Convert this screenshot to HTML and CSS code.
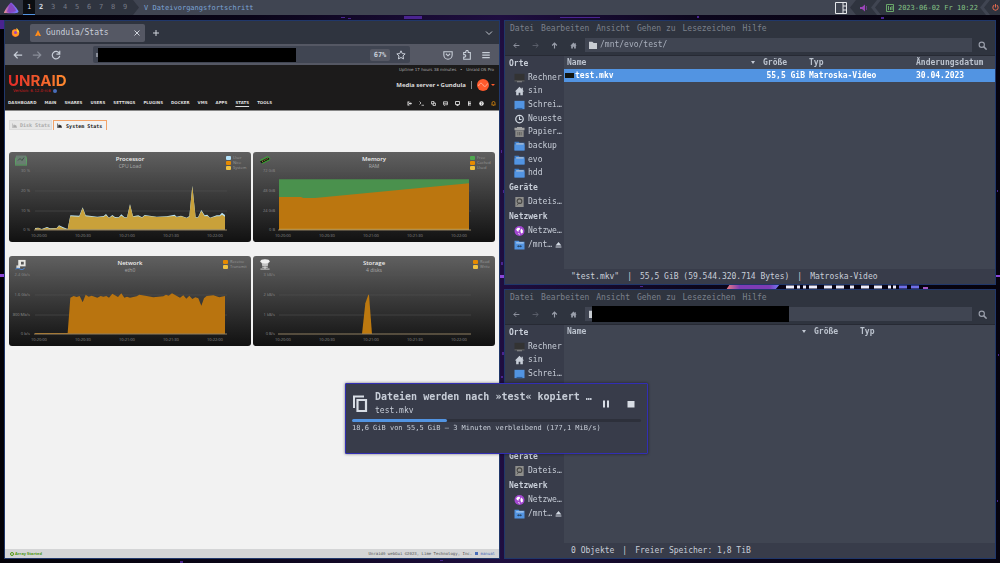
FILE: index.html
```html
<!DOCTYPE html>
<html lang="de">
<head>
<meta charset="utf-8">
<title>Desktop</title>
<link rel="stylesheet" href="styles.css">
</head>
<body class="desktop">
<svg class="symbols" aria-hidden="true">
  <symbol id="left" viewBox="0 0 12 12"><path d="M11 6H1.5M5.5 2 1.5 6l4 4" fill="none" stroke="currentColor" stroke-width="1.5"/></symbol>
  <symbol id="right" viewBox="0 0 12 12"><path d="M1 6h9.500M6.500 2l4 4-4 4" fill="none" stroke="currentColor" stroke-width="1.5"/></symbol>
  <symbol id="up" viewBox="0 0 12 12"><path d="M6 11V2M2 6l4-4 4 4" fill="none" stroke="currentColor" stroke-width="2"/></symbol>
  <symbol id="home" viewBox="0 0 12 12"><path d="M6 1 .5 6.500H2V11h3V8h2v3h3V6.500h1.500L10 5V2H8.500v1.500z" fill="currentColor"/></symbol>
  <symbol id="search" viewBox="0 0 12 12"><circle cx="5" cy="5" r="3.500" fill="none" stroke="currentColor" stroke-width="1.500"/><path d="m7.500 7.500 4 4" stroke="currentColor" stroke-width="2"/></symbol>
  <symbol id="screen" viewBox="0 0 12 12"><path d="M0 1h12v8H0z" fill="#333"/><path d="M0 9h12v1H0z" fill="#6b6b66"/><path d="M3 10.500h6" stroke="#999"/></symbol>
  <symbol id="desk" viewBox="0 0 12 12"><path d="M0 1h12v10H0z" fill="#5294e2"/><path d="M2.500 11V9.500h7V11z" fill="#2b5f9f"/></symbol>
  <symbol id="clock" viewBox="0 0 12 12"><circle cx="6" cy="6" r="4.500" fill="none" stroke="#d3dae3" stroke-width="1.500"/><path d="M6 3v3.500h2.500" fill="none" stroke="#d3dae3" stroke-width="1.300"/></symbol>
  <symbol id="trash" viewBox="0 0 12 12"><path d="M3 0h6v1h3v3H0V1h3z" fill="#a5a5a5"/><path d="M1 4h10v8H1z" fill="#8b8b88"/><path d="M4 6v4M6 6v4M8 6v4" stroke="#5c5c5a"/></symbol>
  <symbol id="folder" viewBox="0 0 12 12"><path d="M0 1h5l1 1h6v9H0z" fill="#3f7fcb"/><path d="M0 4h12v7.500H0z" fill="#5294e2"/><path d="M2 3h9v1H2z" fill="#f0e6dc"/></symbol>
  <symbol id="share" viewBox="0 0 12 12"><path d="M0 1h5l1 1h6v9.500H0z" fill="#5294e2"/><path d="M2 3h9v1H2z" fill="#dce8f5"/><path d="M3 7.500 5 6v3zM9 7.500 7 6v3zM5 7h2v1H5z" fill="#24405f"/></symbol>
  <symbol id="drive" viewBox="0 0 12 12"><path d="M1 0h10v12H1z" fill="#8f8f8c"/><circle cx="6" cy="5" r="2.800" fill="none" stroke="#484846" stroke-width="1.400"/><path d="m3 10 3-4" stroke="#484846"/></symbol>
  <symbol id="globe" viewBox="0 0 12 12"><circle cx="6" cy="6" r="6" fill="#a347d1"/><path d="m2 4 2-2h2l1 2-2 1v2L3 6zM8 3l2 2v3L8 9 7 6zM4 8l2 1v2z" fill="#fff"/></symbol>
  <symbol id="eject" viewBox="0 0 12 12"><path d="m6 0 5 6H1zM1 7.500h10v2H1z" fill="#d3dae3"/></symbol>
  <symbol id="file" viewBox="0 0 12 12"><path d="M0 1h5l2 2h5v9H0z" fill="#c8ccd2"/></symbol>
  <symbol id="area" viewBox="0 0 12 12"><path d="M1 1v10h11" fill="none" stroke="currentColor" stroke-width="1.500"/><path d="M3 10V6l2-3 2 3 2-1 2 2v3z" fill="currentColor"/></symbol>
</svg>

<svg class="wallpaper" viewBox="0 0 1000 563" preserveAspectRatio="none" aria-hidden="true">
  <defs>
    <linearGradient id="sky"><stop offset="0" stop-color="#030208"/><stop offset=".25" stop-color="#0a0518"/><stop offset=".5" stop-color="#1f0e40"/><stop offset=".7" stop-color="#0c061c"/><stop offset="1" stop-color="#06030e"/></linearGradient>
    <linearGradient id="mark"><stop offset="0" stop-color="#f07f7f"/><stop offset=".25" stop-color="#7d3cb5"/><stop offset=".8" stop-color="#7d3cb5"/><stop offset="1" stop-color="#7080ff"/></linearGradient>
    <linearGradient id="ship"><stop offset="0" stop-color="#f49b92"/><stop offset=".4" stop-color="#8446cf"/><stop offset="1" stop-color="#7384ff"/></linearGradient>
  </defs>
  <path d="M0 0h1000v563H0z" fill="url(#sky)"/>
  <path d="M0 274h5v3H0zM499 275h6v3h-6zM996 275h4v2h-4z" fill="#8b46d8"/>
  <path d="M341 17h4v1h-4zM348 18h3v1h-3zM404 16h18v3h-18zM180 561h3v2h-3zM440 560h3v1h-3zM560 17h40v1h-40zM697 16h2v2h-2zM881 17h3v2h-3zM0 20h4v9H0zM501 150h1v3h-1zM503 190h1v3h-1zM501 262h2v3h-2zM502 352h2v3h-2zM501 376h2v2h-2zM640 286h3v1h-3zM997 190h1v2h-1zM998 354h1v2h-1zM997 500h1v2h-1z" fill="#4a2490"/>
  <path d="m730 284h50l-5 6h-49z" fill="url(#mark)"/>
  <path d="M786 287h8M797 287h3M803 287h3M809 287h8M824 287h8M836 287h8M850 287h4M861 287h8M874 287h8M888 287h3M893 287h3" stroke="#eef" stroke-width="3"/>
  <path d="M899 287h8M911 287h8" stroke="#6e70e8" stroke-width="3"/>
  <path d="M923 288h5" stroke="#a458c8" stroke-width="2"/>
</svg>

<header class="bar">
  <div class="bar-left">
    <svg class="ship" viewBox="0 0 16 12"><path d="M8 .500c2 1 7 7 7.500 9-.5 2-4 2-14.500 1.500C1 9 6 2 8 .500z" fill="url(#ship)"/><path d="M8 2c2 2 5 5 5 7-1 1-8 1-9 .500C5 7 7 4 8 2z" fill="#8547bd"/></svg>
    <nav class="spaces"><button class="on">1</button><button class="used">2</button><button>3</button><button>4</button><button>5</button><button>6</button><button>7</button><button>8</button><button>9</button></nav>
  </div>
  <svg class="wedge" viewBox="0 0 6 15"><path d="M0 0 6 7.500 0 15z" fill="#2f343f"/></svg>
  <span class="bar-title">V Dateivorgangsfortschritt</span>
  <svg class="layout" viewBox="0 0 12 12"><path d="M.5.500h11v11H.5zM8 .500v11M8 4h3.500M8 8h3.500" fill="none" stroke="#e4e6ea"/></svg>
  <svg class="wedge" viewBox="0 0 6 15"><path d="M6 0 0 7.500 6 15z" fill="#2f343f"/></svg>
  <div class="bar-sound"><svg viewBox="0 0 8 8"><path d="M0 3h2l3-2.500v7L2 5H0z" fill="#9a45b8"/><path d="M6.500 2v4" stroke="#6b3a88"/></svg></div>
  <svg class="wedge wide" viewBox="0 0 10 15"><path d="M0 0h10v15H0z" fill="#2f343f"/><path d="M6 0 0 7.500 6 15h4L4 7.500 10 0z" fill="#404552"/></svg>
  <div class="bar-date"><svg viewBox="0 0 8 8"><path d="M.5.500h7v7h-7zM2.500 2v4M4.500 3v3M6 2v4" fill="none" stroke="#6aa86a"/></svg><time>2023-06-02 Fr 10:22</time></div>
  <svg class="wedge wide" viewBox="0 0 10 15"><path d="M0 0h10v15H0z" fill="#2f343f"/><path d="M6 0 0 7.500 6 15h4L4 7.500 10 0z" fill="#404552"/></svg>
  <button class="power" aria-label="Power"><svg viewBox="0 0 8 8"><path d="M2.500 1.500a3 3 0 1 0 3 0M4 0v4" fill="none" stroke="#e0694f" stroke-width="1.200"/></svg></button>
</header>

<main class="tiles">
  <section class="win browser">
    <div class="tabs">
      <svg class="fox" viewBox="0 0 12 12"><circle cx="6" cy="6.500" r="5" fill="#ff5b36"/><path d="M2 3c3-2 5 0 8 1 2 3 0 7-4 7.500C3 11 1 8 2 3z" fill="#ff9a22"/><circle cx="6" cy="6" r="2" fill="#a03fc0"/><path d="M7 0c2 1 4 4 4 6L8 5z" fill="#ffd43a"/></svg>
      <div class="tab"><svg viewBox="0 0 8 8"><path d="m4 0 4 8H5L4 6 3 8H0z" fill="#ff8c1a"/></svg><span>Gundula/Stats</span><button aria-label="Tab schließen"><svg viewBox="0 0 8 8"><path d="m1.500 1.500 5 5m0-5-5 5" stroke="#d0d4dc"/></svg></button></div>
      <button class="plus" aria-label="Neuer Tab"><svg viewBox="0 0 8 8"><path d="M4 1v6M1 4h6" stroke="#d0d4dc"/></svg></button>
      <button class="more" aria-label="Tabs"><svg viewBox="0 0 8 8"><path d="m1 2.500 3 3 3-3" fill="none" stroke="#c0c4cc"/></svg></button>
    </div>
    <div class="tools">
      <button aria-label="Zurück"><svg><use href="#left"/></svg></button>
      <button class="dim" aria-label="Vor"><svg><use href="#right"/></svg></button>
      <button aria-label="Neu laden"><svg viewBox="0 0 12 12"><path d="M10 4a4.500 4.500 0 1 0 .5 3M10.500 1v4h-4" fill="none" stroke="currentColor" stroke-width="1.400"/></svg></button>
      <div class="url"><span class="shield"></span><span class="redact"></span><span class="zoom">67%</span><svg class="star" viewBox="0 0 12 12"><path d="m6 1 1.500 3.300 3.500.4-2.600 2.400.7 3.600L6 9l-3.100 1.700.7-3.600L1 4.700l3.500-.4z" fill="none" stroke="currentColor" stroke-width="1.200"/></svg></div>
      <div class="exts">
        <button aria-label="Pocket"><svg viewBox="0 0 12 12"><path d="M1 2h10v4a5 5 0 0 1-10 0zM3.500 4.500 6 7l2.500-2.500" fill="none" stroke="currentColor" stroke-width="1.300"/></svg></button>
        <button aria-label="Erweiterungen"><svg viewBox="0 0 12 12"><path d="M2 3h2.500V2a1.500 1.500 0 0 1 3 0v1H10v8H2V8.500h1a1.500 1.500 0 0 0 0-3H2z" fill="none" stroke="currentColor" stroke-width="1.300"/></svg></button>
        <button aria-label="Menü"><svg viewBox="0 0 12 12"><path d="M1.500 3h9M1.500 6h9M1.500 9h9" stroke="currentColor" stroke-width="1.500"/></svg></button>
      </div>
    </div>
    <div class="uhead">
      <div class="ubrand"><span class="ulogo">UNRAID</span><span class="uver">Version: 6.12.0-rc6 <i></i></span></div>
      <div class="uinfo">
        <p class="uptime">Uptime 17 hours 38 minutes &nbsp; • &nbsp; Unraid OS Pro</p>
        <p class="server"><span>Media server • Gundula</span><span class="vline"></span><svg viewBox="0 0 12 12"><circle cx="6" cy="6" r="6" fill="#ff5a2c"/><path d="M1.500 7C3 3 5 4 6 6s3 2 4.500-1.500" fill="none" stroke="#ffb199"/></svg><b class="caret"></b></p>
      </div>
      <nav class="unav"><a href="#">DASHBOARD</a><a href="#">MAIN</a><a href="#">SHARES</a><a href="#">USERS</a><a href="#">SETTINGS</a><a href="#">PLUGINS</a><a href="#">DOCKER</a><a href="#">VMS</a><a href="#">APPS</a><a href="#" class="cur">STATS</a><a href="#">TOOLS</a></nav>
      <div class="uicons">
        <svg viewBox="0 0 10 10"><path d="M1 1h4v2H3v4h2v2H1zM4 4h3V2l3 3-3 3V6H4z" fill="#ddd"/></svg>
        <svg viewBox="0 0 10 10"><path d="m1 1 3 3-3 3M5 8.500h5" fill="none" stroke="#ddd" stroke-width="1.500"/></svg>
        <svg viewBox="0 0 10 10"><path d="M1 1h5v5H1zM4 4h5v5H4z" fill="none" stroke="#ddd" stroke-width="1.500"/></svg>
        <svg viewBox="0 0 10 10"><path d="M1 1.500h8v6H5L3 9V7.500H1zM1 4.500h8" fill="none" stroke="#ddd" stroke-width="1.500"/></svg>
        <svg viewBox="0 0 10 10"><path d="M1 1h8v6H1zM3 9h4" fill="none" stroke="#ddd" stroke-width="1.800"/></svg>
        <svg viewBox="0 0 10 10"><path d="M2 2h6M2 5h6M2 8h6M3 1v8" stroke="#ddd" stroke-width="1.800"/></svg>
        <svg viewBox="0 0 10 10"><circle cx="5" cy="5" r="4.500" fill="#eee"/><path d="M3.500 4Q5 1 6.500 4L5 6v2" fill="none" stroke="#222"/></svg>
        <svg viewBox="0 0 10 10"><path d="M2 7V4a3 3 0 0 1 6 0v3l1 1H1zM4 9.500h2" fill="none" stroke="#e48d0c" stroke-width="1.500"/></svg>
      </div>
    </div>
    <div class="upage">
      <div class="utabs"><button><svg><use href="#area"/></svg>Disk Stats</button><button class="cur"><svg><use href="#area"/></svg>System Stats</button></div>
      <div class="charts">
        <figure class="card">
          <svg class="plot" viewBox="0 0 242 90">
            <path class="grid" d="M26 19h192M26 39h192M26 59h192"/>
            <g transform="translate(-9 -40) scale(.33333)"><path fill="#b9e2f2" d="M105 353V348L115 347L125 351L141 345L150 349L170 348L177 340L190 346L203 351L211 310L238 311L248 286L257 310L292 314L311 312L318 306L327 317L337 309L345 315L356 316L364 307L374 316L381 316L390 276L399 313L415 310L426 316L434 309L470 314L500 313L524 308L530 314L543 311L560 317L568 312L577 221L587 316L594 316L604 294L614 310L622 308L630 317L650 310L659 310L666 302L675 309V353z"/><path fill="#c9a13a" d="M105 353V350L115 348L125 352L141 347L150 350L170 349L177 342L190 349L203 352L211 313L238 314L248 288L257 313L292 316L311 314L318 310L327 318L337 312L345 317L356 317L364 311L374 317L381 317L390 278L399 314L415 313L426 317L434 311L470 315L500 314L524 312L530 316L543 313L560 318L568 314L577 223L587 317L594 317L604 297L614 313L622 312L630 318L650 313L659 313L666 308L675 314V353z"/></g>
            <path class="axis" d="M25 78h193"/>
            <g class="ylab"><text x="21" y="20">30 %</text><text x="21" y="40">20 %</text><text x="21" y="60">10 %</text><text x="21" y="79">0 %</text></g>
            <g class="xlab"><text x="30" y="85">10:20:00</text><text x="74" y="85">10:20:30</text><text x="118" y="85">10:21:00</text><text x="162" y="85">10:21:30</text><text x="206" y="85">10:22:00</text></g>
          </svg>
          <figcaption class="cap"><svg class="cicon" viewBox="0 0 12 10"><path d="M1 0h10l1 9H0z" fill="#6a7d72"/><path d="M0 9.500h12M1 2 0 9M11 1l1 8" stroke="#58a862"/><path d="m3 5 2-2 2 2 2-3" fill="none" stroke="#3f4f46"/></svg><div class="ctitle"><h3>Processor</h3><p>CPU Load</p></div><ul class="legend"><li class="c-user">User</li><li class="c-or">Nice</li><li class="c-ye">System</li></ul></figcaption>
        </figure>
        <figure class="card">
          <svg class="plot" viewBox="0 0 242 90">
            <path class="grid" d="M26 19h192M26 39h192M26 59h192"/>
            <g transform="translate(-3 -7) scale(.33333)"><path fill="#4a914d" d="M87 103H657V255H87z"/><path fill="#bb760f" d="M87 156H153L160 159H195L657 115V255H87z"/><path fill="#d0a03a" d="M87 251H657V255H87z"/></g>
            <path class="axis" d="M25 78h193"/>
            <g class="ylab"><text x="22" y="20">72 GiB</text><text x="22" y="40">48 GiB</text><text x="22" y="60">24 GiB</text><text x="22" y="79">0 B</text></g>
            <g class="xlab"><text x="30" y="85">10:20:00</text><text x="74" y="85">10:20:30</text><text x="118" y="85">10:21:00</text><text x="162" y="85">10:21:30</text><text x="206" y="85">10:22:00</text></g>
          </svg>
          <figcaption class="cap"><svg class="cicon" viewBox="0 0 12 10"><path d="m1 6 8-4 2 2-8 4z" fill="#111"/><path d="m1 5 8-4 2 2M3 8l8-4" fill="none" stroke="#35b02c"/><path d="m3 6 6-3" stroke="#c8b23a" stroke-dasharray="1 1"/></svg><div class="ctitle"><h3>Memory</h3><p>RAM</p></div><ul class="legend"><li class="c-gr">Free</li><li class="c-or">Cached</li><li class="c-ye">Used</li></ul></figcaption>
        </figure>
        <figure class="card">
          <svg class="plot" viewBox="0 0 242 90">
            <path class="grid" d="M26 19h192M26 39h192M26 59h192"/>
            <path fill="#b9740f" transform="translate(-9 -6) scale(.33333)" d="M105 252V249H203L211 143L221 138L230 141L239 138L248 157L257 134L266 140L275 137L292 143L302 138L310 140L319 138L327 143L337 131L354 141L364 130L373 143L381 140L390 143L410 139L418 134L440 138L460 142L490 139L498 134L506 137L516 130L540 143L550 136L559 146L568 137L577 147L586 142L595 145L604 167L612 145L620 138L640 136L658 142L675 138V252z"/>
            <path class="axis" d="M25 78h193"/>
            <g class="ylab"><text x="21" y="20">2.4 Gb/s</text><text x="21" y="40">1.6 Gb/s</text><text x="21" y="60">800 Mb/s</text><text x="21" y="79">0 b/s</text></g>
            <g class="xlab"><text x="30" y="85">10:20:00</text><text x="74" y="85">10:20:30</text><text x="118" y="85">10:21:00</text><text x="162" y="85">10:21:30</text><text x="206" y="85">10:22:00</text></g>
          </svg>
          <figcaption class="cap long"><svg class="cicon" viewBox="0 0 12 12"><path d="M3 1h8v7H3z" fill="#e8e8e4"/><path d="M6 3h3v3H6z" fill="#555"/><path d="M1 7h4v3H1z" fill="#dcdcd8"/><path d="M0 11q3-2 5 0t5-1" fill="none" stroke="#4a8be0"/></svg><div class="ctitle"><h3>Network</h3><p>eth0</p></div><ul class="legend"><li class="c-or">Receive</li><li class="c-ye">Transmit</li></ul></figcaption>
        </figure>
        <figure class="card">
          <svg class="plot" viewBox="0 0 242 90">
            <path class="grid" d="M26 19h192M26 39h192M26 59h192"/>
            <path fill="#bd790f" transform="translate(-3 -6) scale(.33333)" d="M336 252 346 160 355 134H357L366 252z"/>
            <path class="axis" d="M25 78h193"/>
            <g class="ylab"><text x="22" y="20">3 kB/s</text><text x="22" y="40">2 kB/s</text><text x="22" y="60">1 kB/s</text><text x="22" y="79">0 B/s</text></g>
            <g class="xlab"><text x="30" y="85">10:20:00</text><text x="74" y="85">10:20:30</text><text x="118" y="85">10:21:00</text><text x="162" y="85">10:21:30</text><text x="206" y="85">10:22:00</text></g>
          </svg>
          <figcaption class="cap short"><svg class="cicon" viewBox="0 0 12 12"><path d="M2 2h8l-1 6H3z" fill="#c2c2c2"/><ellipse cx="6" cy="2.500" rx="5" ry="2.300" fill="#f0f0f0"/><path d="M3 9h6M6 8v3M1 11h10" stroke="#ddd"/></svg><div class="ctitle"><h3>Storage</h3><p>4 disks</p></div><ul class="legend"><li class="c-or">Read</li><li class="c-ye">Write</li></ul></figcaption>
        </figure>
      </div>
    </div>
    <footer class="ufoot"><span class="array"><i></i>Array Started</span><span class="copy">Unraid® webGui ©2023, Lime Technology, Inc. <a href="#"><i></i>manual</a></span></footer>
  </section>

  <section class="win files">
    <nav class="menu"><button>Datei</button><button>Bearbeiten</button><button>Ansicht</button><button>Gehen zu</button><button>Lesezeichen</button><button>Hilfe</button></nav>
    <div class="path">
      <button aria-label="Zurück"><svg><use href="#left"/></svg></button><button class="dim" aria-label="Vor"><svg><use href="#right"/></svg></button><button aria-label="Hoch"><svg><use href="#up"/></svg></button><button aria-label="Home"><svg><use href="#home"/></svg></button>
      <label class="loc"><svg><use href="#file"/></svg><input aria-label="Pfad" value="/mnt/evo/test/"></label>
      <button class="find" aria-label="Suchen"><svg><use href="#search"/></svg></button>
    </div>
    <aside class="side">
      <h2>Orte</h2>
      <ul class="places"><li><svg><use href="#screen"/></svg>Rechner</li><li><svg><use href="#home"/></svg>sin</li><li><svg><use href="#desk"/></svg>Schrei…</li><li><svg><use href="#clock"/></svg>Neueste</li><li><svg><use href="#trash"/></svg>Papier…</li><li><svg><use href="#folder"/></svg>backup</li><li><svg><use href="#folder"/></svg>evo</li><li><svg><use href="#folder"/></svg>hdd</li></ul>
      <h2>Geräte</h2>
      <ul><li><svg><use href="#drive"/></svg>Dateis…</li></ul>
      <h2>Netzwerk</h2>
      <ul><li><svg><use href="#globe"/></svg>Netzwe…</li><li><svg><use href="#share"/></svg>/mnt…<svg class="eject"><use href="#eject"/></svg></li></ul>
    </aside>
    <div class="list">
      <table>
        <colgroup><col><col class="w-size"><col class="w-type"><col class="w-date"></colgroup>
        <thead><tr><th><span class="sort">Name</span></th><th>Größe</th><th>Typ</th><th>Änderungsdatum</th></tr></thead>
        <tbody><tr><td><span class="entry"><i class="thumb"></i>test.mkv</span></td><td class="num">55,5 GiB</td><td>Matroska-Video</td><td>30.04.2023</td></tr></tbody>
      </table>
    </div>
    <div class="status"><span>"test.mkv"</span><span>|</span><span>55,5 GiB (59.544.320.714 Bytes)</span><span>|</span><span>Matroska-Video</span></div>
  </section>

  <section class="win files">
    <nav class="menu"><button>Datei</button><button>Bearbeiten</button><button>Ansicht</button><button>Gehen zu</button><button>Lesezeichen</button><button>Hilfe</button></nav>
    <div class="path">
      <button aria-label="Zurück"><svg><use href="#left"/></svg></button><button class="dim" aria-label="Vor"><svg><use href="#right"/></svg></button><button aria-label="Hoch"><svg><use href="#up"/></svg></button><button aria-label="Home"><svg><use href="#home"/></svg></button>
      <div class="loc"><svg><use href="#file"/></svg><span class="redact"></span></div>
      <button class="find" aria-label="Suchen"><svg><use href="#search"/></svg></button>
    </div>
    <aside class="side">
      <h2>Orte</h2>
      <ul class="places"><li><svg><use href="#screen"/></svg>Rechner</li><li><svg><use href="#home"/></svg>sin</li><li><svg><use href="#desk"/></svg>Schrei…</li></ul>
      <h2>Geräte</h2>
      <ul><li><svg><use href="#drive"/></svg>Dateis…</li></ul>
      <h2>Netzwerk</h2>
      <ul><li><svg><use href="#globe"/></svg>Netzwe…</li><li><svg><use href="#share"/></svg>/mnt…<svg class="eject"><use href="#eject"/></svg></li></ul>
    </aside>
    <div class="list">
      <table>
        <colgroup><col><col class="w-size"><col class="w-last"></colgroup>
        <thead><tr><th><span class="sort">Name</span></th><th>Größe</th><th>Typ</th></tr></thead>
      </table>
    </div>
    <div class="status"><span>0 Objekte</span><span>|</span><span>Freier Speicher: 1,8 TiB</span></div>
  </section>
</main>

<section class="dialog" role="dialog" aria-labelledby="job">
  <div class="job">
    <svg class="copyicon" viewBox="0 0 16 18"><path d="M2 13V1.500h10" fill="none" stroke="#d8dde5" stroke-width="2"/><path d="M5.500 5h8.500v11H5.500z" fill="none" stroke="#d8dde5" stroke-width="2.200"/></svg>
    <div class="jobtext"><h2 id="job">Dateien werden nach »test« kopiert …</h2><p>test.mkv</p></div>
    <button aria-label="Pause"><svg viewBox="0 0 8 8"><path d="M1 .500h2v7H1zM5 .500h2v7H5z" fill="#d8dde5"/></svg></button>
    <button aria-label="Stopp"><svg viewBox="0 0 8 8"><path d="M.500 1h7v6.500h-7z" fill="#d8dde5"/></svg></button>
  </div>
  <progress value="33" max="100" aria-labelledby="job"></progress>
  <p class="rate">18,6 GiB von 55,5 GiB — 3 Minuten verbleibend (177,1 MiB/s)</p>
</section>
</body>
</html>
```
FILE: styles.css
```css
* { box-sizing: border-box; margin: 0; padding: 0; }
button { background: none; border: 0; color: inherit; font: inherit; display: flex; align-items: center; justify-content: center; }
ul { list-style: none; }
a { color: inherit; text-decoration: none; }
svg { display: block; flex: none; }

.desktop { height: 100vh; display: flex; flex-direction: column; overflow: hidden; background: #08040f; color: #c8ced8; font: 8px/12px "DejaVu Sans Mono", "Liberation Mono", monospace; }
.symbols { position: absolute; width: 0; height: 0; }
.wallpaper { position: fixed; inset: 0; width: 100%; height: 100%; z-index: -1; }

/* Top bar */
.bar { flex: none; height: 15px; display: flex; align-items: center; background: #404552; font-size: 7px; }
.bar-left { display: flex; align-items: center; height: 15px; background: #2f343f; padding-left: 3px; width: 133px; gap: 4px; }
.ship { width: 16px; height: 12px; }
.spaces { display: flex; height: 15px; color: #767b87; }
.spaces button { width: 12px; border-bottom: 1px solid transparent; }
.spaces .on { background: #0b0d11; border-color: #5294e2; color: #d3dae3; }
.spaces .used { color: #d3dae3; font-weight: bold; }
.wedge { width: 6px; height: 15px; }
.wedge.wide { width: 10px; }
.bar-title { padding-left: 5px; color: #7ba3d4; flex: 1; }
.layout { width: 12px; height: 12px; margin-right: 3px; }
.bar-sound { background: #2f343f; height: 15px; width: 15px; display: flex; align-items: center; padding-left: 4px; }
.bar-sound svg { width: 8px; height: 8px; }
.bar-date { background: #2f343f; height: 15px; display: flex; align-items: center; gap: 4px; padding: 0 2px 0 5px; color: #84c285; }
.bar-date svg { width: 8px; height: 8px; }
.power { background: #2f343f; height: 15px; width: 10px; }
.power svg { width: 7px; height: 7px; }

/* Tiled windows */
.tiles { flex: 1; min-height: 0; display: grid; grid-template-columns: 496fr 492fr; grid-template-rows: 265fr 270fr; gap: 4px; padding: 5px 4px 4px; }
.win { border: 1px solid #20376a; min-width: 0; min-height: 0; overflow: hidden; }
.redact { background: #000; }

/* Browser */
.browser { grid-row: 1 / 3; display: flex; flex-direction: column; background: #f2f2f2; }
.tabs { height: 23px; background: #2f343f; display: flex; align-items: center; padding-right: 6px; }
.fox { width: 9px; height: 9px; margin: 0 7px 0 6px; }
.tab { width: 115px; height: 18px; margin-left: 3px; background: #555864; border-radius: 2px; display: flex; align-items: center; padding: 0 4px 0 5px; gap: 5px; }
.tab > svg { width: 6px; height: 6px; }
.tab span { flex: 1; }
.tab button svg, .plus svg, .more svg { width: 8px; height: 8px; }
.plus { margin-left: 7px; }
.more { margin-left: auto; }
.tools { height: 21px; background: #555864; display: flex; align-items: center; padding: 0 8px 0 7px; }
.tools > button { width: 11px; margin-right: 8px; }
.tools button svg { width: 10px; height: 10px; }
.dim { opacity: .45; }
.url { width: 317px; height: 17px; margin-left: 24px; background: #404552; border-radius: 2px; display: flex; align-items: center; }
.shield { width: 2px; height: 4px; margin-left: 3px; background: #8a8f9a; }
.url .redact { width: 198px; height: 14px; }
.zoom { margin-left: auto; width: 20px; height: 12px; background: #555864; border-radius: 2px; text-align: center; font-size: 7px; font-weight: bold; }
.star { width: 10px; height: 10px; margin: 0 4px 0 6px; }
.exts { margin-left: auto; display: flex; gap: 9px; }

/* Unraid header */
.uhead { height: 46px; background: #1c1b1b; border-bottom: 1px solid #888; display: grid; grid-template-columns: 1fr auto; grid-template-rows: 31px 1fr; padding: 0 3px; font-family: "Open Sans", "DejaVu Sans", sans-serif; color: #ddd; }
.ubrand { padding-top: 8px; }
.ulogo { display: block; width: max-content; font: bold 15px/15px Inter, sans-serif; background: linear-gradient(90deg, #e22828, #ff8c2f); background-clip: text; -webkit-background-clip: text; color: transparent; }
.uver { display: flex; align-items: center; gap: 2px; padding-left: 5px; color: #d01c1c; font-size: 4px; line-height: 6px; font-family: "DejaVu Sans", sans-serif; }
.uver i { width: 4px; height: 4px; border-radius: 50%; background: #486dba; }
.uinfo { text-align: right; }
.uptime { font-size: 4px; line-height: 6px; padding: 2px 2px 0 0; color: #aaa; font-family: "DejaVu Sans", sans-serif; }
.server { display: flex; align-items: center; justify-content: flex-end; margin-top: 2px; height: 20px; gap: 5px; font: bold 6px/12px "Open Sans", sans-serif; padding-right: 1px; }
.server svg { width: 12px; height: 12px; }
.vline { width: 1px; height: 8px; background: #888; }
.caret { border: 2px solid transparent; border-top-color: #ff5a2c; border-bottom: 0; margin-left: -3px; }
.unav { display: flex; align-items: center; gap: 8px; font: bold 4px/8px "DejaVu Sans", sans-serif; }
.unav .cur { text-decoration: underline; text-underline-offset: 2px; }
.uicons { display: flex; align-items: center; justify-content: flex-end; gap: 7px; }
.uicons svg { width: 5px; height: 5px; }

/* Unraid page */
.upage { flex: 1; min-height: 0; padding: 9px 4px; }
.utabs { display: flex; gap: 1px; font-size: 5px; line-height: 8px; font-weight: bold; color: #aaa; }
.utabs button { height: 10px; padding: 0 1px 0 2px; gap: 3px; background: #e6e6e6; border: 1px solid #ddd; }
.utabs svg { width: 5px; height: 5px; }
.utabs .cur { padding: 0 4px 0 3px; gap: 4px; background: #f2f2f2; border-color: #f3a469; border-bottom: 0; color: #222; }
.charts { display: grid; grid-template-columns: 1fr 1fr; column-gap: 2px; row-gap: 14px; padding-top: 22px; }
.card { display: grid; background: linear-gradient(#606060, #111); border-radius: 3px; }
.plot, .cap { grid-area: 1 / 1; }
.plot { width: 100%; height: auto; }
.grid { stroke: #555; stroke-opacity: .5; fill: none; }
.axis { stroke: #8f7e60; fill: none; }
.ylab, .xlab { font: 4px "Open Sans", sans-serif; fill: #8a8a8a; }
.ylab { text-anchor: end; }
.xlab { text-anchor: middle; }
.cap { display: grid; grid-template-columns: 25px 1fr 25px; align-items: start; padding-top: 3px; font-family: "Open Sans", sans-serif; }
.cap.long { grid-template-columns: 28px 1fr 28px; }
.cap.short { grid-template-columns: 22px 1fr 22px; }
.cicon { width: 12px; height: 11px; margin-left: 6px; }
.ctitle { text-align: center; }
.ctitle h3 { font-size: 6px; line-height: 8px; font-weight: 600; color: #eee; }
.ctitle p { font-size: 5px; line-height: 7px; color: #aaa; }
.legend { font-size: 4px; line-height: 5px; color: #999; }
.legend li { display: flex; align-items: center; gap: 2px; }
.legend li::before { content: ""; width: 5px; height: 4px; border-radius: 1px; background: currentColor; }
.c-user::before { color: #b4e2fa; }
.c-or::before { color: #e68a00; }
.c-ye::before { color: #efc140; }
.c-gr::before { color: #4fa84f; }
.ufoot { height: 9px; flex: none; background: #d4d5d6; display: flex; align-items: center; justify-content: space-between; padding: 0 4px 0 5px; font-size: 4px; line-height: 8px; color: #555; }
.array { display: flex; align-items: center; gap: 1px; color: #4f9a14; font: bold 4px/8px "Open Sans", sans-serif; }
.array i { width: 4px; height: 4px; border: 1px solid #4f9a14; border-radius: 50%; }
.copy a { color: #486dba; }
.copy i { display: inline-block; width: 3px; height: 3px; margin-right: 3px; background: #486dba; }

/* File manager */
.files { display: grid; grid-template-columns: 59px 1fr; grid-template-rows: 14px 21px 1fr 15px; background: #404552; }
.menu { grid-column: 1 / 3; background: #2f343f; display: flex; align-items: flex-end; gap: 7px; padding-left: 5px; color: #7c818c; }
.path { grid-column: 1 / 3; background: #2f343f; border-bottom: 1px solid #272a34; display: flex; align-items: center; padding: 0 8px; gap: 12px; color: #9a9fab; }
.path button { width: 7px; }
.path button svg { width: 7px; height: 7px; }
.path .loc { flex: 1; height: 14px; margin: 0 -6px 0 -4px; background: #404552; display: flex; align-items: center; padding-left: 4px; gap: 3px; }
.loc svg { width: 8px; height: 8px; }
.loc input { flex: 1; min-width: 0; border: 0; background: none; color: #a9b0bd; font: inherit; outline: 0; }
.loc .redact { width: 197px; height: 16px; margin-left: -8px; }
.path .find svg { width: 9px; height: 9px; }
.path .find { width: 9px; }
.side { grid-row: 3 / 5; background: #383c4a; overflow: hidden; }
.side h2 { font-size: 8px; line-height: 15px; padding-left: 4px; }
.side ul { display: grid; grid-auto-rows: 14px; }
.side .places { height: 109px; grid-template-rows: repeat(8, 1fr); }
.side li { display: flex; align-items: center; gap: 3px; padding-left: 9px; white-space: nowrap; }
.side li svg { width: 11px; height: 10px; }
.side li .eject { width: 7px; height: 7px; }
.list { overflow: hidden; }
.list table { width: 100%; table-layout: fixed; border-collapse: collapse; }
.w-size { width: 46px; }
.w-type { width: 107px; }
.w-date { width: 82px; }
.w-last { width: 138px; }
.list th, .list td { height: 13px; padding: 0 3px; text-align: left; white-space: nowrap; line-height: 13px; }
.list th { color: #bcc3ce; font-weight: bold; }
.list td { background: #5294e2; color: #fff; font-weight: bold; }
.list td.num { text-align: right; padding-right: 1px; }
.list td:first-child { padding-left: 1px; }
.sort, .entry { display: flex; align-items: center; }
.sort { justify-content: space-between; padding-right: 2px; }
.sort::after { content: ""; border: 2px solid transparent; border-top: 3px solid #c3c9d3; border-bottom: 0; }
.thumb { width: 9px; height: 5px; background: #12150f; margin-right: 1px; }
.status { background: #383c4a; display: flex; align-items: center; gap: 8px; padding-left: 7px; white-space: nowrap; }

/* Copy progress */
.dialog { position: absolute; left: 345px; top: 383px; width: 303px; height: 71px; border: 1px solid #322eb4; border-radius: 1px; background: #383c4a; padding: 5px 6px; box-shadow: 0 0 3px #0008; }
.job { display: flex; align-items: center; height: 29px; }
.copyicon { width: 16px; height: 18px; }
.jobtext { flex: 1; padding-left: 7px; white-space: nowrap; }
.jobtext h2 { font-size: 10px; line-height: 14px; }
.jobtext p { line-height: 13px; }
.job button { width: 8px; margin-right: 17px; }
.job button:last-child { margin-right: 6px; }
.job button svg { width: 8px; height: 8px; }
.dialog progress { display: block; width: 100%; height: 3px; appearance: none; border: 0; margin-top: 1px; }
.dialog progress::-webkit-progress-bar { background: #2d303b; border-radius: 2px; }
.dialog progress::-webkit-progress-value { background: #5294e2; border-radius: 2px; }
.rate { font-size: 7px; line-height: 12px; }
```
